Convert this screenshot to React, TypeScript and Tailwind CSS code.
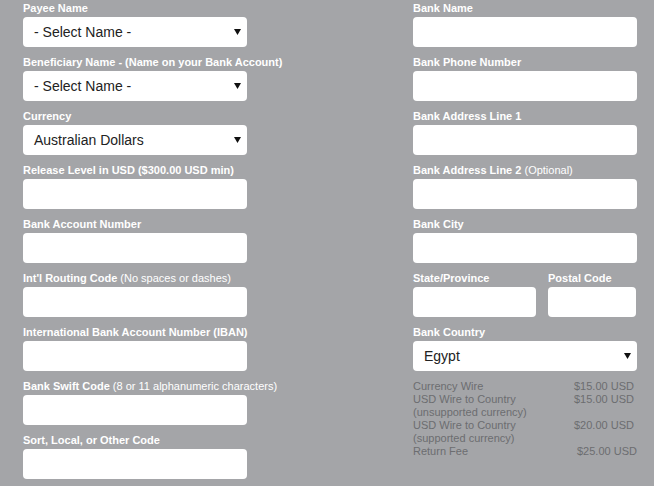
import React from "react";

interface FieldProps {
  label: string;
  note?: string;
  select?: string;
  width?: string;
}

const Arrow: React.FC = () => (
  <svg width="7" height="6" viewBox="0 0 7 6" className="absolute right-[6px] top-[12px]">
    <polygon points="0,0 7,0 3.5,6" fill="#111" />
  </svg>
);

const Field: React.FC<FieldProps> = ({ label, note, select, width = "w-full" }) => (
  <div className={`${width} flex flex-col mb-[9px]`}>
    <div className="h-[13px] mb-[2px] text-[11px] leading-[13px] font-bold text-white whitespace-nowrap">
      {label}
      {note && <span className="font-normal"> {note}</span>}
    </div>
    <div className="relative h-[30px] rounded-[4px] bg-white">
      {select && (
        <>
          <div className="pl-[11px] text-[14px] leading-[30px] text-[#222]">{select}</div>
          <Arrow />
        </>
      )}
    </div>
  </div>
);

const fees = [
  { name: ["Currency Wire"], amount: "$15.00 USD" },
  { name: ["USD Wire to Country", "(unsupported currency)"], amount: "$15.00 USD" },
  { name: ["USD Wire to Country", "(supported currency)"], amount: "$20.00 USD" },
  { name: ["Return Fee"], amount: "$25.00 USD", shift: true },
];

export default function App() {
  return (
    <div
      className="w-[654px] h-[486px] overflow-hidden bg-[#a4a5a8] pt-[2px] pl-[23px] flex gap-[166px]"
      style={{ fontFamily: '"Liberation Sans", Arial, sans-serif' }}
    >
      <div className="w-[224px] flex flex-col">
        <Field label="Payee Name" select="- Select Name -" />
        <Field label="Beneficiary Name - (Name on your Bank Account)" select="- Select Name -" />
        <Field label="Currency" select="Australian Dollars" />
        <Field label="Release Level in USD ($300.00 USD min)" />
        <Field label="Bank Account Number" />
        <Field label="Int'l Routing Code" note="(No spaces or dashes)" />
        <Field label="International Bank Account Number (IBAN)" />
        <Field label="Bank Swift Code" note="(8 or 11 alphanumeric characters)" />
        <Field label="Sort, Local, or Other Code" />
      </div>
      <div className="w-[224px] flex flex-col">
        <Field label="Bank Name" />
        <Field label="Bank Phone Number" />
        <Field label="Bank Address Line 1" />
        <Field label="Bank Address Line 2" note="(Optional)" />
        <Field label="Bank City" />
        <div className="flex gap-[12px]">
          <Field label="State/Province" width="w-[123px]" />
          <Field label="Postal Code" width="w-[88px]" />
        </div>
        <Field label="Bank Country" select="Egypt" />
        <div className="text-[11px] leading-[13px] text-[#6c6d70]">
          {fees.map((f, i) => (
            <div key={i} className="flex">
              <div className="w-[161px]">
                {f.name.map((n) => (
                  <div key={n}>{n}</div>
                ))}
              </div>
              <div className={f.shift ? "pl-[3px]" : ""}>{f.amount}</div>
            </div>
          ))}
        </div>
      </div>
    </div>
  );
}
